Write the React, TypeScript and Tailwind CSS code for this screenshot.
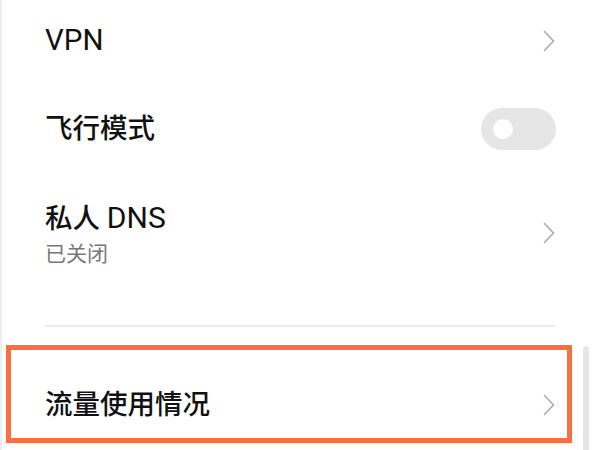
const font = { fontFamily: 'Roboto, "Noto Sans CJK SC", sans-serif' };

function Chevron() {
  return (
    <svg width="12" height="22" viewBox="0 0 12 22" className="shrink-0">
      <path d="M1.5 1.5 L10.5 11 L1.5 20.5" fill="none" stroke="#ababab" strokeWidth="1.6" strokeLinecap="round" strokeLinejoin="round" />
    </svg>
  );
}

function Toggle() {
  return (
    <div className="flex h-[42px] w-[75px] items-center rounded-full bg-[#e6e6e6] pl-[12px]">
      <div className="h-[20px] w-[20px] rounded-full bg-white" />
    </div>
  );
}

export default function App() {
  return (
    <div className="relative h-[450px] w-[600px] overflow-hidden border-l-2 border-[#eeeeee] bg-white text-[#111]" style={font}>
      <div className="flex h-[82px] items-center justify-between pl-[43px] pr-[45px]">
        <span className="text-[29.5px] leading-none">VPN</span>
        <Chevron />
      </div>

      <div className="flex h-[94px] items-center justify-between pl-[43px] pr-[44px]">
        <span className="text-[27.5px] font-medium leading-none">飞行模式</span>
        <Toggle />
      </div>

      <div className="flex h-[114px] items-center justify-between pl-[43px] pr-[45px]">
        <div className="flex flex-col gap-[11px] pt-[1px]">
          <span className="text-[27.5px] font-medium leading-none">
            私人 <span className="text-[30px] font-normal">DNS</span>
          </span>
          <span className="text-[21px] leading-none text-[#777]">已关闭</span>
        </div>
        <Chevron />
      </div>

      <div className="ml-[43px] mr-[45px] mt-[35px] h-[2px] bg-[#ececec]" />

      <div className="flex">
        <div className="ml-[4px] mt-[18px] flex h-[98px] w-[566px] items-center justify-between border-[5px] border-[#fb6e40] pl-[34px] pr-[12px] pt-[22px]">
          <span className="text-[27.5px] font-medium leading-none">流量使用情况</span>
          <Chevron />
        </div>
        <div className="ml-[11px] mt-[19px] h-[120px] w-[6px] rounded-t-full bg-[#e6e6e6]" />
      </div>
    </div>
  );
}
